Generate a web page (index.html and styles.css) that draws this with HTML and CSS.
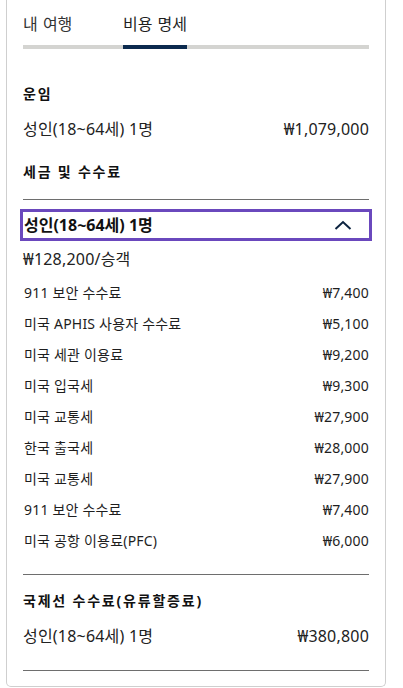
FILE: index.html
```html
<!DOCTYPE html>
<html lang="ko">
<head>
<meta charset="utf-8">
<title>비용 명세</title>
<link rel="stylesheet" href="styles.css">
</head>
<body>
<div class="card">
  <div class="tabs">
    <div class="tab">내 여행</div>
    <div class="tab active">비용 명세</div>
  </div>

  <div class="section-title first">운임</div>
  <div class="line"><span>성인(18~64세) 1명</span><span>₩1,079,000</span></div>

  <div class="section-title">세금 및 수수료</div>
  <div class="divider top"></div>

  <div class="acc-head">
    <span>성인(18~64세) 1명</span>
    <svg class="chev" width="18" height="10" viewBox="0 0 18 10"><polyline points="1.5,9 9,2 16.5,9" fill="none" stroke="#0c2340" stroke-width="2"/></svg>
  </div>
  <div class="per">₩128,200/승객</div>

  <div class="rows">
    <div class="row"><span>911 보안 수수료</span><span>₩7,400</span></div>
    <div class="row"><span>미국 APHIS 사용자 수수료</span><span>₩5,100</span></div>
    <div class="row"><span>미국 세관 이용료</span><span>₩9,200</span></div>
    <div class="row"><span>미국 입국세</span><span>₩9,300</span></div>
    <div class="row"><span>미국 교통세</span><span>₩27,900</span></div>
    <div class="row"><span>한국 출국세</span><span>₩28,000</span></div>
    <div class="row"><span>미국 교통세</span><span>₩27,900</span></div>
    <div class="row"><span>911 보안 수수료</span><span>₩7,400</span></div>
    <div class="row"><span>미국 공항 이용료(PFC)</span><span>₩6,000</span></div>
  </div>

  <div class="divider mid"></div>
  <div class="section-title intl">국제선 수수료(유류할증료)</div>
  <div class="line"><span>성인(18~64세) 1명</span><span>₩380,800</span></div>
  <div class="divider bottom"></div>
</div>
</body>
</html>
```

FILE: styles.css
```css
* { box-sizing: border-box; }
html, body { margin: 0; padding: 0; background: #fff; }
body {
  font-family: "Noto Sans", "Noto Sans CJK KR", sans-serif;
  color: #222;
  width: 403px;
  height: 688px;
  overflow: hidden;
}
.card {
  margin-left: 6px;
  width: 380px;
  border: 1px solid #cfcfcf;
  border-top: 0;
  border-radius: 0 0 5px 5px;
  padding: 0 16px 15px;
}
.tabs {
  display: flex;
  border-bottom: 4px solid #d4d4d1;
  height: 49px;
}
.tab {
  font-size: 16px;
  line-height: 20px;
  padding-top: 14px;
  height: 49px;
  margin-bottom: -4px;
  color: #333;
  border-bottom: 4px solid transparent;
  word-spacing: 1px;
}
.tab:first-child { width: 100px; }
.tab.active { border-bottom-color: #0c2a4e; color: #1f1f1f; }

.section-title {
  font-size: 14px;
  font-weight: 700;
  line-height: 20px;
  letter-spacing: 1.8px;
  color: #111;
  margin-top: 22px;
}
.section-title.first { margin-top: 35px; }
.section-title.intl { margin-top: 16px; }

.line {
  display: flex;
  justify-content: space-between;
  font-size: 16px;
  line-height: 22px;
  margin-top: 14px;
  color: #222;
  letter-spacing: 0.2px;
}
.divider { height: 1px; background: #6e6e6e; }
.divider.top { margin-top: 17px; }
.divider.mid { margin-top: 18px; }
.divider.bottom { margin-top: 23px; }

.acc-head {
  margin: 9px -3px 0;
  height: 32px;
  border: 3px solid #6a48bd;
  display: flex;
  align-items: center;
  justify-content: space-between;
  padding: 0 17px 0 1px;
  font-size: 16px;
  font-weight: 700;
  line-height: 22px;
  color: #111;
}
.chev { display: block; margin-top: -1px; }
.per {
  font-size: 16px;
  line-height: 22px;
  margin-top: 7px;
  color: #222;
  letter-spacing: 0.2px;
}
.rows { margin-top: 7px; }
.row {
  display: flex;
  justify-content: space-between;
  align-items: center;
  height: 31px;
  font-size: 14px;
  line-height: 20px;
  color: #1e1e1e;
  padding-left: 1px;
  letter-spacing: 0.2px;
}
```
